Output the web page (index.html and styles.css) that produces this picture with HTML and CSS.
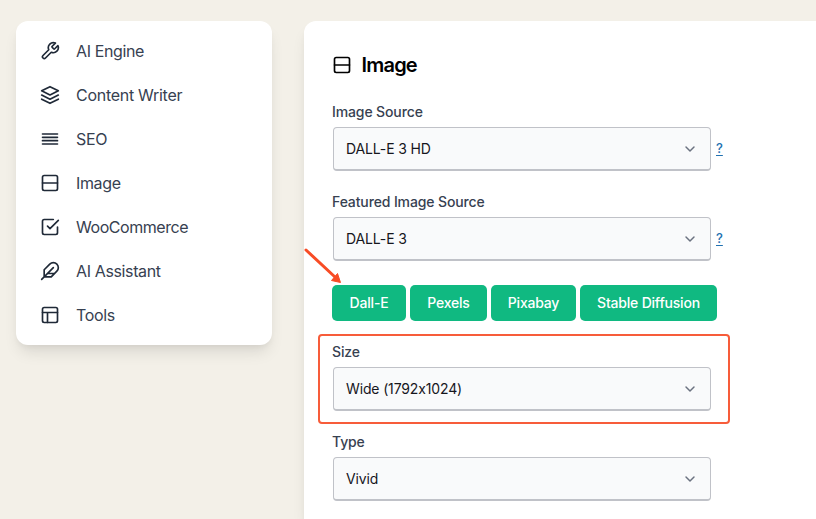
FILE: index.html
```html
<!DOCTYPE html>
<html lang="en">
<head>
<meta charset="utf-8">
<title>Image settings</title>
<link rel="stylesheet" href="styles.css">
</head>
<body>
<svg class="defs" width="0" height="0">
  <symbol id="split" viewBox="0 0 24 24"><rect x="3" y="3" width="18" height="18" rx="2"/><path d="M3 12h18"/></symbol>
  <symbol id="chevron" viewBox="0 0 24 24"><path d="m6 9 6 6 6-6"/></symbol>
</svg>
<div class="page">
  <nav class="sidebar">
    <a class="item"><svg class="icon" viewBox="0 0 24 24"><path d="M14.7 6.3a1 1 0 0 0 0 1.4l1.6 1.6a1 1 0 0 0 1.4 0l3.77-3.77a6 6 0 0 1-7.94 7.94l-6.91 6.91a2.12 2.12 0 0 1-3-3l6.91-6.91a6 6 0 0 1 7.94-7.94l-3.76 3.76z"/></svg><span>AI Engine</span></a>
    <a class="item"><svg class="icon" viewBox="0 0 24 24"><path d="M12 2 2 7l10 5 10-5-10-5zM2 17l10 5 10-5M2 12l10 5 10-5"/></svg><span class="roomy">Content Writer</span></a>
    <a class="item"><svg class="icon" viewBox="0 0 24 24"><path d="M3 6h18M3 10h18M3 14h18M3 18h18"/></svg><span>SEO</span></a>
    <a class="item"><svg class="icon"><use href="#split"/></svg><span>Image</span></a>
    <a class="item"><svg class="icon" viewBox="0 0 24 24"><path d="m9 11 3 3L22 4M21 12v7a2 2 0 0 1-2 2H5a2 2 0 0 1-2-2V5a2 2 0 0 1 2-2h11"/></svg><span class="snug">WooCommerce</span></a>
    <a class="item"><svg class="icon" viewBox="0 0 24 24"><path d="M20.24 12.24a6 6 0 0 0-8.49-8.49L5 10.5V19h8.5zM16 8 2 22M17.5 15H9"/></svg><span>AI Assistant</span></a>
    <a class="item"><svg class="icon" viewBox="0 0 24 24"><rect x="3" y="3" width="18" height="18" rx="2"/><path d="M3 9h18M9 21V9"/></svg><span>Tools</span></a>
  </nav>
  <main class="panel">
    <h1 class="title"><svg class="icon"><use href="#split"/></svg><span>Image</span></h1>
    <section class="field">
      <label>Image Source</label>
      <div class="row"><div class="select"><span>DALL-E 3 HD</span><svg class="chevron"><use href="#chevron"/></svg></div><a class="help">?</a></div>
    </section>
    <section class="field">
      <label>Featured Image Source</label>
      <div class="row"><div class="select"><span>DALL-E 3</span><svg class="chevron"><use href="#chevron"/></svg></div><a class="help">?</a></div>
    </section>
    <div class="tabs">
      <button class="w-dalle">Dall-E</button><button class="w-pexels">Pexels</button><button class="w-pixabay">Pixabay</button><button class="w-stable">Stable Diffusion</button>
      <svg class="arrow" viewBox="0 0 40 40"><path class="shaft" d="M4 4 33 31"/><path class="head" d="M38.500 36.500 29.500 34.500 35.500 27.500z"/></svg>
    </div>
    <section class="field marked">
      <label>Size</label>
      <div class="row"><div class="select"><span>Wide (1792x1024)</span><svg class="chevron"><use href="#chevron"/></svg></div></div>
    </section>
    <section class="field last">
      <label>Type</label>
      <div class="row"><div class="select"><span>Vivid</span><svg class="chevron"><use href="#chevron"/></svg></div></div>
    </section>
  </main>
</div>
</body>
</html>
```
FILE: styles.css
```css
*, *::after { box-sizing: border-box; }
body {
  margin: 0;
  background: #f3f0e8;
  font-family: Inter, sans-serif;
  font-feature-settings: "calt" 0;
}
.defs { display: block; }
.page {
  display: grid;
  grid-template-columns: 256px 1fr;
  gap: 32px;
  align-items: start;
  height: 519px;
  padding: 21px 0 0 16px;
  overflow: hidden;
}
.sidebar, .panel {
  background: #fff;
  box-shadow: 0 10px 15px -3px rgba(0, 0, 0, .1), 0 4px 6px -2px rgba(0, 0, 0, .05);
}
.sidebar { height: 324px; padding: 8px 24px; border-radius: 12px; }
.item {
  display: flex;
  align-items: center;
  gap: 16px;
  height: 44px;
  color: #374151;
  font-size: 16px;
  letter-spacing: -.37px;
  white-space: nowrap;
}
.roomy { letter-spacing: -.28px; }
.snug { letter-spacing: -.45px; }
.icon {
  width: 20px;
  height: 20px;
  fill: none;
  stroke: #1f2937;
  stroke-width: 2;
  stroke-linecap: round;
  stroke-linejoin: round;
}
.panel { height: 498px; padding: 30px 28px 0; border-radius: 12px 0 0; }
.title {
  display: flex;
  align-items: center;
  gap: 9.5px;
  height: 28px;
  margin: 0 0 23px;
  color: #000;
  font-size: 20px;
  font-weight: 600;
  letter-spacing: -.8px;
}
.title .icon { stroke: #000; }
.field { height: 90px; }
.last { height: 70px; }
label {
  display: block;
  height: 20px;
  margin-bottom: 5px;
  color: #374151;
  font-size: 14px;
  font-weight: 500;
  line-height: 20px;
  letter-spacing: -.12px;
}
.row { display: flex; align-items: center; gap: 5px; margin-left: 1px; }
.select {
  display: flex;
  align-items: center;
  justify-content: space-between;
  width: 378px;
  height: 44px;
  padding: 0 12px;
  border: 1px solid #c0c2c8;
  border-bottom-width: 2px;
  border-radius: 4px;
  background: #f9fafb;
  color: #16161d;
  font-size: 14px;
  line-height: 21px;
  letter-spacing: -.14px;
}
.chevron {
  width: 16px;
  height: 16px;
  margin-top: 1px;
  fill: none;
  stroke: #6b7280;
  stroke-width: 2.2;
  stroke-linecap: round;
  stroke-linejoin: round;
}
.help {
  padding-bottom: 2px;
  color: #2271b1;
  font-size: 13px;
  font-weight: 500;
  text-decoration: underline;
  text-underline-offset: 2px;
}
.tabs { position: relative; display: flex; gap: 4px; height: 60px; padding-top: 3px; }
button {
  height: 36px;
  padding: 0 0 1px;
  border: 0;
  border-radius: 5px;
  background: #10b981;
  color: #fff;
  font: 500 14px/20px Inter, sans-serif;
  letter-spacing: -.2px;
}
.w-dalle { width: 74px; }
.w-pexels { width: 77px; }
.w-pixabay { width: 85px; }
.w-stable { width: 137px; }
.arrow { position: absolute; left: -30px; top: -36px; width: 40px; height: 40px; }
.shaft { fill: none; stroke: #f84c25; stroke-width: 3; stroke-linecap: round; }
.head { fill: #f84c25; stroke: #f84c25; }
.marked { position: relative; }
.marked::after {
  position: absolute;
  top: -8px;
  left: -14px;
  width: 412px;
  height: 90px;
  border: 2px solid #f75c3a;
  border-radius: 4px;
  content: "";
}
```
